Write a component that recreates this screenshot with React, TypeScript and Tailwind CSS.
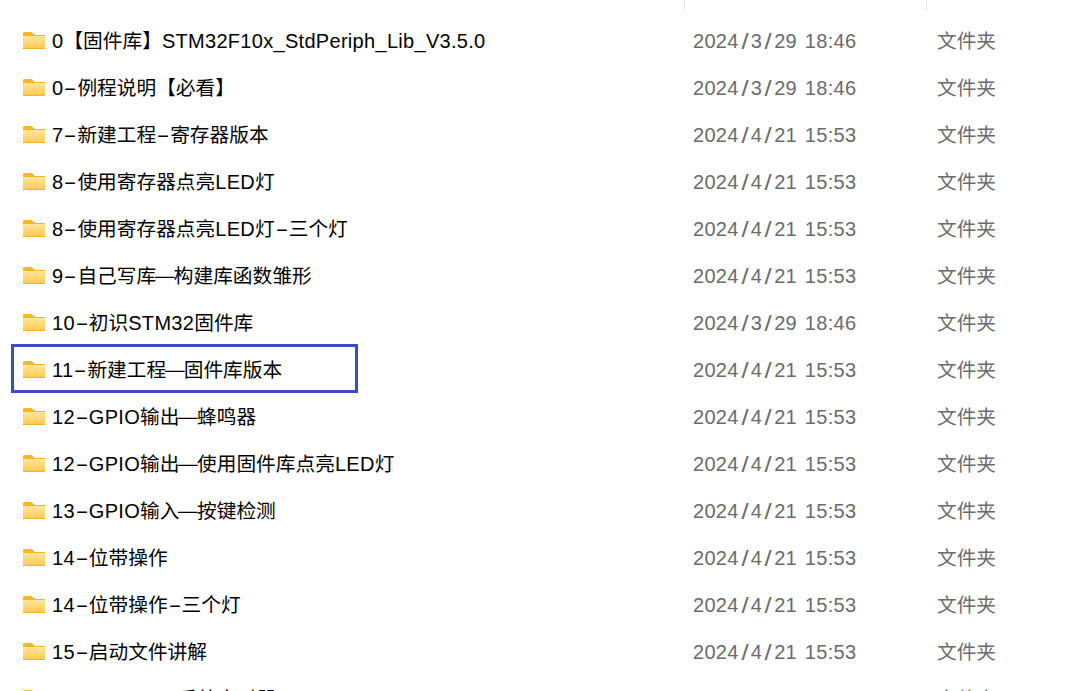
const rows = [
  ['0【固件库】STM32F10x_StdPeriph_Lib_V3.5.0', '2024/3/29 18:46'],
  ['0-例程说明【必看】', '2024/3/29 18:46'],
  ['7-新建工程-寄存器版本', '2024/4/21 15:53'],
  ['8-使用寄存器点亮LED灯', '2024/4/21 15:53'],
  ['8-使用寄存器点亮LED灯-三个灯', '2024/4/21 15:53'],
  ['9-自己写库—构建库函数雏形', '2024/4/21 15:53'],
  ['10-初识STM32固件库', '2024/3/29 18:46'],
  ['11-新建工程—固件库版本', '2024/4/21 15:53'],
  ['12-GPIO输出—蜂鸣器', '2024/4/21 15:53'],
  ['12-GPIO输出—使用固件库点亮LED灯', '2024/4/21 15:53'],
  ['13-GPIO输入—按键检测', '2024/4/21 15:53'],
  ['14-位带操作', '2024/4/21 15:53'],
  ['14-位带操作-三个灯', '2024/4/21 15:53'],
  ['15-启动文件讲解', '2024/4/21 15:53'],
  ['16-SysTick—系统定时器', '2024/4/21 15:53'],
]

// hyphen and slash are much wider in the original font, latin is a bit looser
const Wide = ({ text }: { text: string }) => (
  <>
    {text.split(/([-/—]|[\u0020-\u007e]+?(?=[-/—]|[^\u0020-\u007e]|$))/).map((part, i) =>
      part === '-' ? (
        <span key={i} className="inline-block w-[14px] scale-x-[2] text-center">-</span>
      ) : part === '/' ? (
        <span key={i} className="inline-block w-[12px] scale-x-[1.3] scale-y-[1.1] text-center">/</span>
      ) : part === '—' ? (
        <span key={i} className="inline-block scale-x-[1.25] font-['Noto_Sans_CJK_SC'] leading-none">—</span>
      ) : /^[\u0020-\u007e]+$/.test(part) ? (
        <span key={i} className="text-[20px] tracking-[0.3px] [word-spacing:2px]">{part}</span>
      ) : (
        part
      )
    )}
  </>
)

const FolderIcon = () => (
  <svg width="24" height="18" viewBox="0 0 24 18" className="shrink-0">
    <defs>
      <linearGradient id="folderBody" x1="0" y1="0" x2="0" y2="1">
        <stop offset="0" stopColor="#ffe79c" />
        <stop offset="1" stopColor="#fdcb55" />
      </linearGradient>
    </defs>
    <path d="M1 1.5C1 .8 1.5 0 2.3 0H9.5L13 3V5H1Z" fill="#fbb91f" />
    <rect x="1" y="3" width="22" height="14" fill="#f2b233" />
    <rect x="1" y="4" width="22" height="12" fill="url(#folderBody)" />
  </svg>
)

export default function App() {
  return (
    <div className="h-[691px] w-[1069px] overflow-hidden bg-white font-['Liberation_Sans','Noto_Sans_CJK_SC',sans-serif]">
      <div className="flex h-[11px]">
        <div className="ml-[684px] h-full w-px bg-[#e5e5e5]" />
        <div className="ml-[241px] h-full w-px bg-[#e5e5e5]" />
      </div>
      <div className="mt-[7px]">
        {rows.map(([name, date], i) => (
          <div key={i} className="relative flex h-[47px] items-center text-[19.7px]">
            <div className="flex w-[693px] items-center gap-[6px] pl-[22px] text-black">
              <FolderIcon />
              <span className="whitespace-nowrap"><Wide text={name} /></span>
            </div>
            <div className="w-[244px] text-[#6b6b6b]"><Wide text={date} /></div>
            <div className="text-[#6b6b6b]">文件夹</div>
            {i === 7 && (
              <div className="absolute left-[11px] top-[-3px] h-[49px] w-[347px] border-[3px] border-[#4049c8]" />
            )}
          </div>
        ))}
      </div>
    </div>
  )
}
